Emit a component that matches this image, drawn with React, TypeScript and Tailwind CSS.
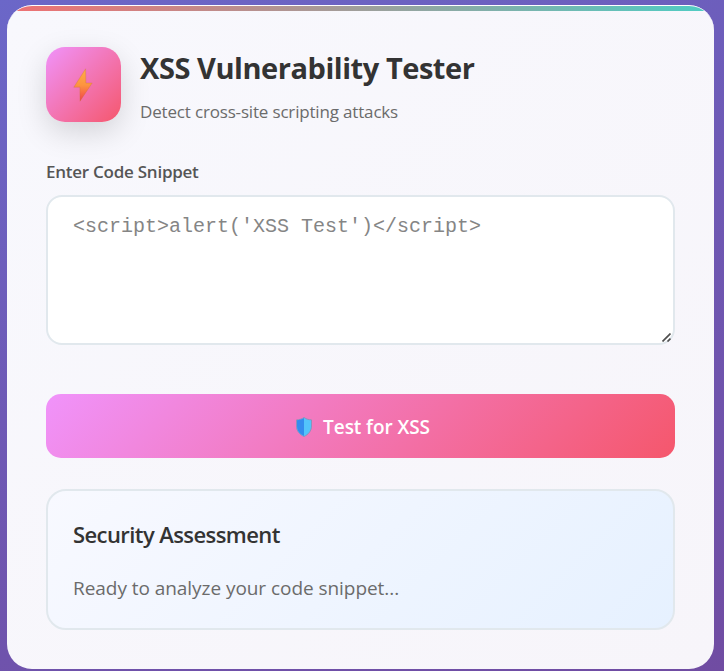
function BoltIcon() {
  return (
    <svg width="20" height="34" viewBox="0 0 20 34" aria-hidden="true">
      <defs>
        <linearGradient id="bolt" x1="0" y1="0" x2="0" y2="1">
          <stop offset="0" stopColor="#ffae43" />
          <stop offset="0.5" stopColor="#fd9440" />
          <stop offset="1" stopColor="#f2414b" />
        </linearGradient>
      </defs>
      <path d="M12.6 .8 .8 19.2h6.1L7 33.2 19.2 15h-6.3z" fill="url(#bolt)" stroke="#c9743f" strokeOpacity=".55" strokeWidth=".6" />
    </svg>
  );
}

function ShieldIcon() {
  return (
    <svg width="16" height="20" viewBox="0 0 16 20" aria-hidden="true">
      <path d="M8 .5C6 2 3.500 2.700.5 2.900V9c0 5 3 8.400 7.500 10.500C12.500 17.400 15.500 14 15.500 9V2.900C12.500 2.700 10 2 8 .5z" fill="#53c4fb" stroke="#8b91b5" strokeWidth=".9" />
      <path d="M8 1C6 2.400 3.600 3.100 1 3.300V9c0 4.700 2.800 7.900 7 9.900z" fill="#348cee" />
    </svg>
  );
}

export default function App() {
  return (
    <div className="h-[671px] w-full bg-[linear-gradient(160deg,#6b67c8_0%,#6e59b5_45%,#704ca2_100%)] pt-[5px] pr-[10px] pl-[7px] font-['Open_Sans','Noto_Sans',sans-serif]">
      <main className="h-[664px] overflow-hidden rounded-[25px] border-t border-white bg-[linear-gradient(135deg,#f8f8fd,#f7f5fa)]">
        <div className="h-[5px] bg-[linear-gradient(90deg,#f07072,#4ecdc4)]" />
        <div className="px-[39px] pt-9">
          <header className="flex h-[75px] items-start gap-[19px]">
            <div className="flex size-[75px] shrink-0 items-center justify-center rounded-[19px] bg-[linear-gradient(135deg,#f093fb,#f5576c)] pt-[1px] pr-[2px] shadow-[0_10px_30px_rgba(0,0,0,0.15)]">
              <BoltIcon />
            </div>
            <div className="whitespace-nowrap">
              <h1 className="pt-[1px] text-[29px] leading-10 font-bold tracking-[-0.45px] text-[#333]">XSS Vulnerability Tester</h1>
              <p className="pt-[12px] text-[17px] leading-6 tracking-[-0.17px] text-[#6b6b6b]">Detect cross-site scripting attacks</p>
            </div>
          </header>
          <label htmlFor="code" className="mt-[38px] block text-[17px] leading-6 font-semibold tracking-[-0.25px] whitespace-nowrap text-[#555]">
            Enter Code Snippet
          </label>
          <div className="relative mt-[11px] h-[150px]">
            <textarea
              id="code"
              className="block h-full w-full resize-none rounded-[16px] border-2 border-[#e1e8ed] bg-white px-[25px] py-[18px] font-['Liberation_Mono',monospace] text-[20px] leading-6 placeholder:text-[#858585] focus:outline-none"
              placeholder="<script>alert('XSS Test')</script>"
            />
            <svg className="pointer-events-none absolute right-1 bottom-[3px]" width="9" height="9" viewBox="0 0 9 9" aria-hidden="true">
              <path d="M.5 8.500 8.500.5M5.500 8.500 8.500 5.500" stroke="#505050" strokeWidth="1.7" />
            </svg>
          </div>
          <button className="mt-[49px] flex h-16 w-full items-center justify-center gap-[11px] rounded-[15px] bg-[linear-gradient(135deg,#f093fb,#f5576c)] pt-[2px] pl-[5px] text-[19px] font-semibold tracking-[-0.08px] whitespace-nowrap text-white">
            <ShieldIcon />
            <span>Test for XSS</span>
          </button>
          <section className="mt-[31px] h-[141px] rounded-[20px] border-2 border-[#e1e8ed] bg-[linear-gradient(135deg,#f8f9ff,#e6f1ff)] px-[25px] pt-[27px] whitespace-nowrap">
            <h2 className="text-[22px] leading-8 font-semibold tracking-[-0.58px] text-[#333]">Security Assessment</h2>
            <p className="mt-6 text-[19px] leading-7 tracking-[-0.05px] text-[#6b6b6b]">Ready to analyze your code snippet...</p>
          </section>
        </div>
      </main>
    </div>
  );
}
